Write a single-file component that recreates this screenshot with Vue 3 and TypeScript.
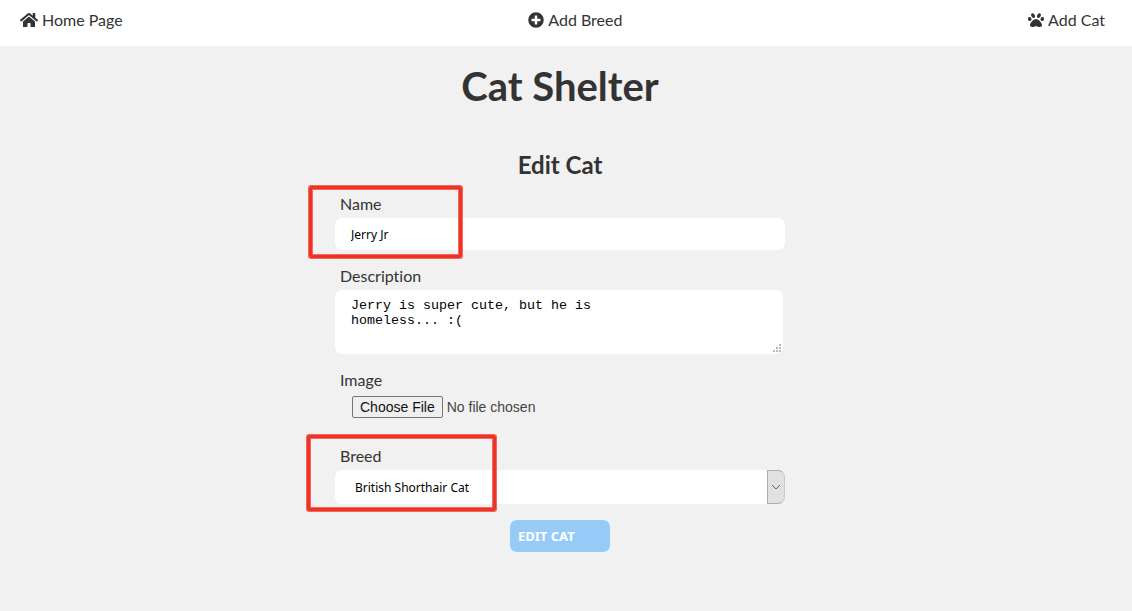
<script setup lang="ts">
import { ref } from 'vue'

const name = ref<string>('Jerry Jr')
const description = ref<string>('Jerry is super cute, but he is\nhomeless... :(')
const breeds: string[] = ['British Shorthair Cat']
const breed = ref<string>(breeds[0])
</script>

<template>
  <div class="page">
    <header>
      <nav class="nav">
        <a href="#home">
          <svg class="icon home" viewBox="0 0 576 512" aria-hidden="true">
            <path d="M280.4 148.3 96 300.1V464a16 16 0 0 0 16 16l112.1-.3a16 16 0 0 0 15.9-16V368a16 16 0 0 1 16-16h64a16 16 0 0 1 16 16v95.6a16 16 0 0 0 16 16.1l112 .3a16 16 0 0 0 16-16V300L295.7 148.3a12.2 12.2 0 0 0-15.3 0zM571.6 251.5 488 182.6V44.1a12 12 0 0 0-12-12h-56a12 12 0 0 0-12 12v72.6L318.5 43a48 48 0 0 0-61 0L4.3 251.5a12 12 0 0 0-1.6 16.9l25.5 31a12 12 0 0 0 16.9 1.6l235.2-193.7a12.2 12.2 0 0 1 15.3 0L530.9 301a12 12 0 0 0 16.9-1.6l25.5-31a12 12 0 0 0-1.7-16.9z" />
          </svg>
          Home Page
        </a>
        <a href="#add-breed">
          <svg class="icon" viewBox="0 0 512 512" aria-hidden="true">
            <path d="M256 8a248 248 0 1 0 0 496 248 248 0 0 0 0-496zm144 276c0 6.600-5.400 12-12 12h-92v92c0 6.600-5.400 12-12 12h-56c-6.600 0-12-5.400-12-12v-92h-92c-6.600 0-12-5.400-12-12v-56c0-6.600 5.400-12 12-12h92v-92c0-6.600 5.400-12 12-12h56c6.600 0 12 5.400 12 12v92h92c6.600 0 12 5.400 12 12v56z" />
          </svg>
          Add Breed
        </a>
        <a href="#add-cat">
          <svg class="icon" viewBox="0 0 512 512" aria-hidden="true">
            <path d="M256 224c-79.400 0-192 122.800-192 200.300 0 34.900 26.800 55.700 71.700 55.700 48.800 0 81.100-25.100 120.300-25.100 39.500 0 71.900 25.100 120.300 25.100 44.900 0 71.700-20.800 71.700-55.700C448 346.800 335.400 224 256 224zm-147.300-12.600c-10.400-34.700-42.400-57.100-71.500-50.100s-44.300 40.900-33.900 75.600 42.400 57.100 71.500 50.100 44.300-40.900 33.900-75.600zm84.100-20.800c30.900-8.100 42.600-48.400 26.200-90s-54.900-68.800-85.800-60.700-42.600 48.400-26.200 90 55 68.800 85.800 60.700zm282-29.300c-29.100-7-61.100 15.400-71.500 50.100s4.800 68.600 33.900 75.600 61.100-15.400 71.500-50.100-4.800-68.600-33.900-75.600zm-155.600 29.300c30.900 8.100 69.300-19.100 85.800-60.700s4.700-81.900-26.200-90-69.300 19.100-85.800 60.700-4.700 81.900 26.200 90z" />
          </svg>
          Add Cat
        </a>
      </nav>
    </header>

    <main>
      <h1>Cat Shelter</h1>
      <h2>Edit Cat</h2>
      <form @submit.prevent>
        <div class="field">
          <label for="name">Name</label>
          <input id="name" v-model="name" class="text" type="text" />
          <span class="mark mark-name"></span>
        </div>
        <div class="field">
          <label for="description">Description</label>
          <div class="area">
            <textarea id="description" v-model="description" spellcheck="false"></textarea>
            <svg class="grip" viewBox="0 0 9 9" aria-hidden="true">
              <path d="M7 1h2v2h-2zM4 4h2v2h-2zM7 4h2v2h-2zM1 7h2v2h-2zM4 7h2v2h-2zM7 7h2v2h-2z" />
            </svg>
          </div>
        </div>
        <div class="field upload">
          <label for="image">Image</label>
          <input id="image" type="file" />
        </div>
        <div class="field">
          <label for="breed">Breed</label>
          <div class="choice">
            <select id="breed" v-model="breed">
              <option v-for="b in breeds" :key="b" :value="b">{{ b }}</option>
            </select>
            <span class="arrow">
              <svg viewBox="0 0 8 6" aria-hidden="true"><path d="M0 1l4 4 4-4" /></svg>
            </span>
          </div>
          <span class="mark mark-breed"></span>
        </div>
        <button type="submit">Edit Cat</button>
      </form>
    </main>
  </div>
</template>

<style>
body {
  margin: 0;
  background: #f1f1f1;
}
</style>

<style scoped>
.page {
  min-height: 100vh;
  background: #f1f1f1;
  color: #333;
  font-family: Lato, sans-serif;
  font-size: 16px;
  font-variant-ligatures: none;
}
.nav {
  display: flex;
  justify-content: space-between;
  align-items: center;
  padding: 8px 27px 14px 20px;
  background: #fff;
  line-height: 24px;
}
.nav a {
  display: flex;
  align-items: center;
  gap: 4px;
  color: #333;
  text-decoration: none;
}
.icon {
  width: 16px;
  height: 16px;
  fill: #333;
}
.icon.home {
  width: 18px;
}
main {
  display: flex;
  flex-direction: column;
  align-items: center;
  padding: 16px 12px 32px 0;
}
h1 {
  margin: 0;
  font-size: 40px;
  line-height: 48px;
}
h2 {
  margin: 40px 0 12px;
  font-size: 24px;
  line-height: 30px;
}
form {
  display: flex;
  flex-direction: column;
  gap: 14px;
  width: 100%;
  max-width: 450px;
}
.field {
  position: relative;
  display: flex;
  flex-direction: column;
}
label {
  padding: 0 0 2px 5px;
  line-height: 24px;
}
.text,
select {
  box-sizing: border-box;
  width: 100%;
  border: 0;
  border-radius: 7px;
  background: #fff;
  color: #000;
  font-family: "Noto Sans", sans-serif;
  font-size: 12px;
}
.text {
  height: 32px;
  padding: 1px 16px 0;
}
.area {
  position: relative;
  display: flex;
  margin-right: 2px;
}
textarea {
  box-sizing: border-box;
  width: 100%;
  height: 64px;
  padding: 8px 16px;
  border: 0;
  border-radius: 7px;
  background: #fff;
  color: #000;
  font-family: "Liberation Mono", monospace;
  line-height: 15px;
  resize: none;
}
.grip {
  position: absolute;
  right: 2px;
  bottom: 2px;
  width: 9px;
  height: 9px;
  fill: #bbb;
}
.upload {
  padding-bottom: 12px;
}
.upload input {
  margin: 2px 0 0 17px;
  color: #444;
  font-family: "Liberation Sans", Arial, sans-serif;
  font-size: 14px;
}
.upload input::file-selector-button {
  box-sizing: border-box;
  height: 22px;
  margin-right: 4px;
  padding: 0 7px;
  border: 1px solid #767676;
  border-radius: 2px;
  background: #efefef;
  color: #111;
  font-family: "Liberation Sans", Arial, sans-serif;
  font-size: 14px;
}
.choice {
  position: relative;
  display: flex;
}
select {
  height: 34px;
  padding: 1px 20px 0;
  appearance: none;
}
.arrow {
  position: absolute;
  top: 0;
  right: 0;
  bottom: 0;
  box-sizing: border-box;
  display: flex;
  align-items: center;
  justify-content: center;
  width: 18px;
  border: 1px solid #adadad;
  border-right-color: #c8c8c8;
  border-radius: 0 7px 7px 0;
  background: #e1e1e1;
  pointer-events: none;
}
.arrow svg {
  width: 8px;
  height: 6px;
  fill: none;
  stroke: #606060;
}
.mark {
  position: absolute;
  border: 3px solid #ee3224;
  border-radius: 2px;
  box-shadow: 0 0 0 1px #f0685e, inset 0 0 0 1px #f0685e;
  pointer-events: none;
}
.mark-name {
  top: -6px;
  left: -26px;
  width: 147px;
  height: 66px;
}
.mark-breed {
  top: -9px;
  left: -28px;
  width: 183px;
  height: 70px;
}
button {
  align-self: center;
  width: 100px;
  height: 32px;
  margin-top: 2px;
  padding: 0 8px;
  border: 0;
  border-radius: 7px;
  background: #96cbf8;
  color: #fff;
  font-family: "Noto Sans", sans-serif;
  font-size: 13px;
  font-weight: 700;
  text-align: left;
  text-transform: uppercase;
}
</style>
